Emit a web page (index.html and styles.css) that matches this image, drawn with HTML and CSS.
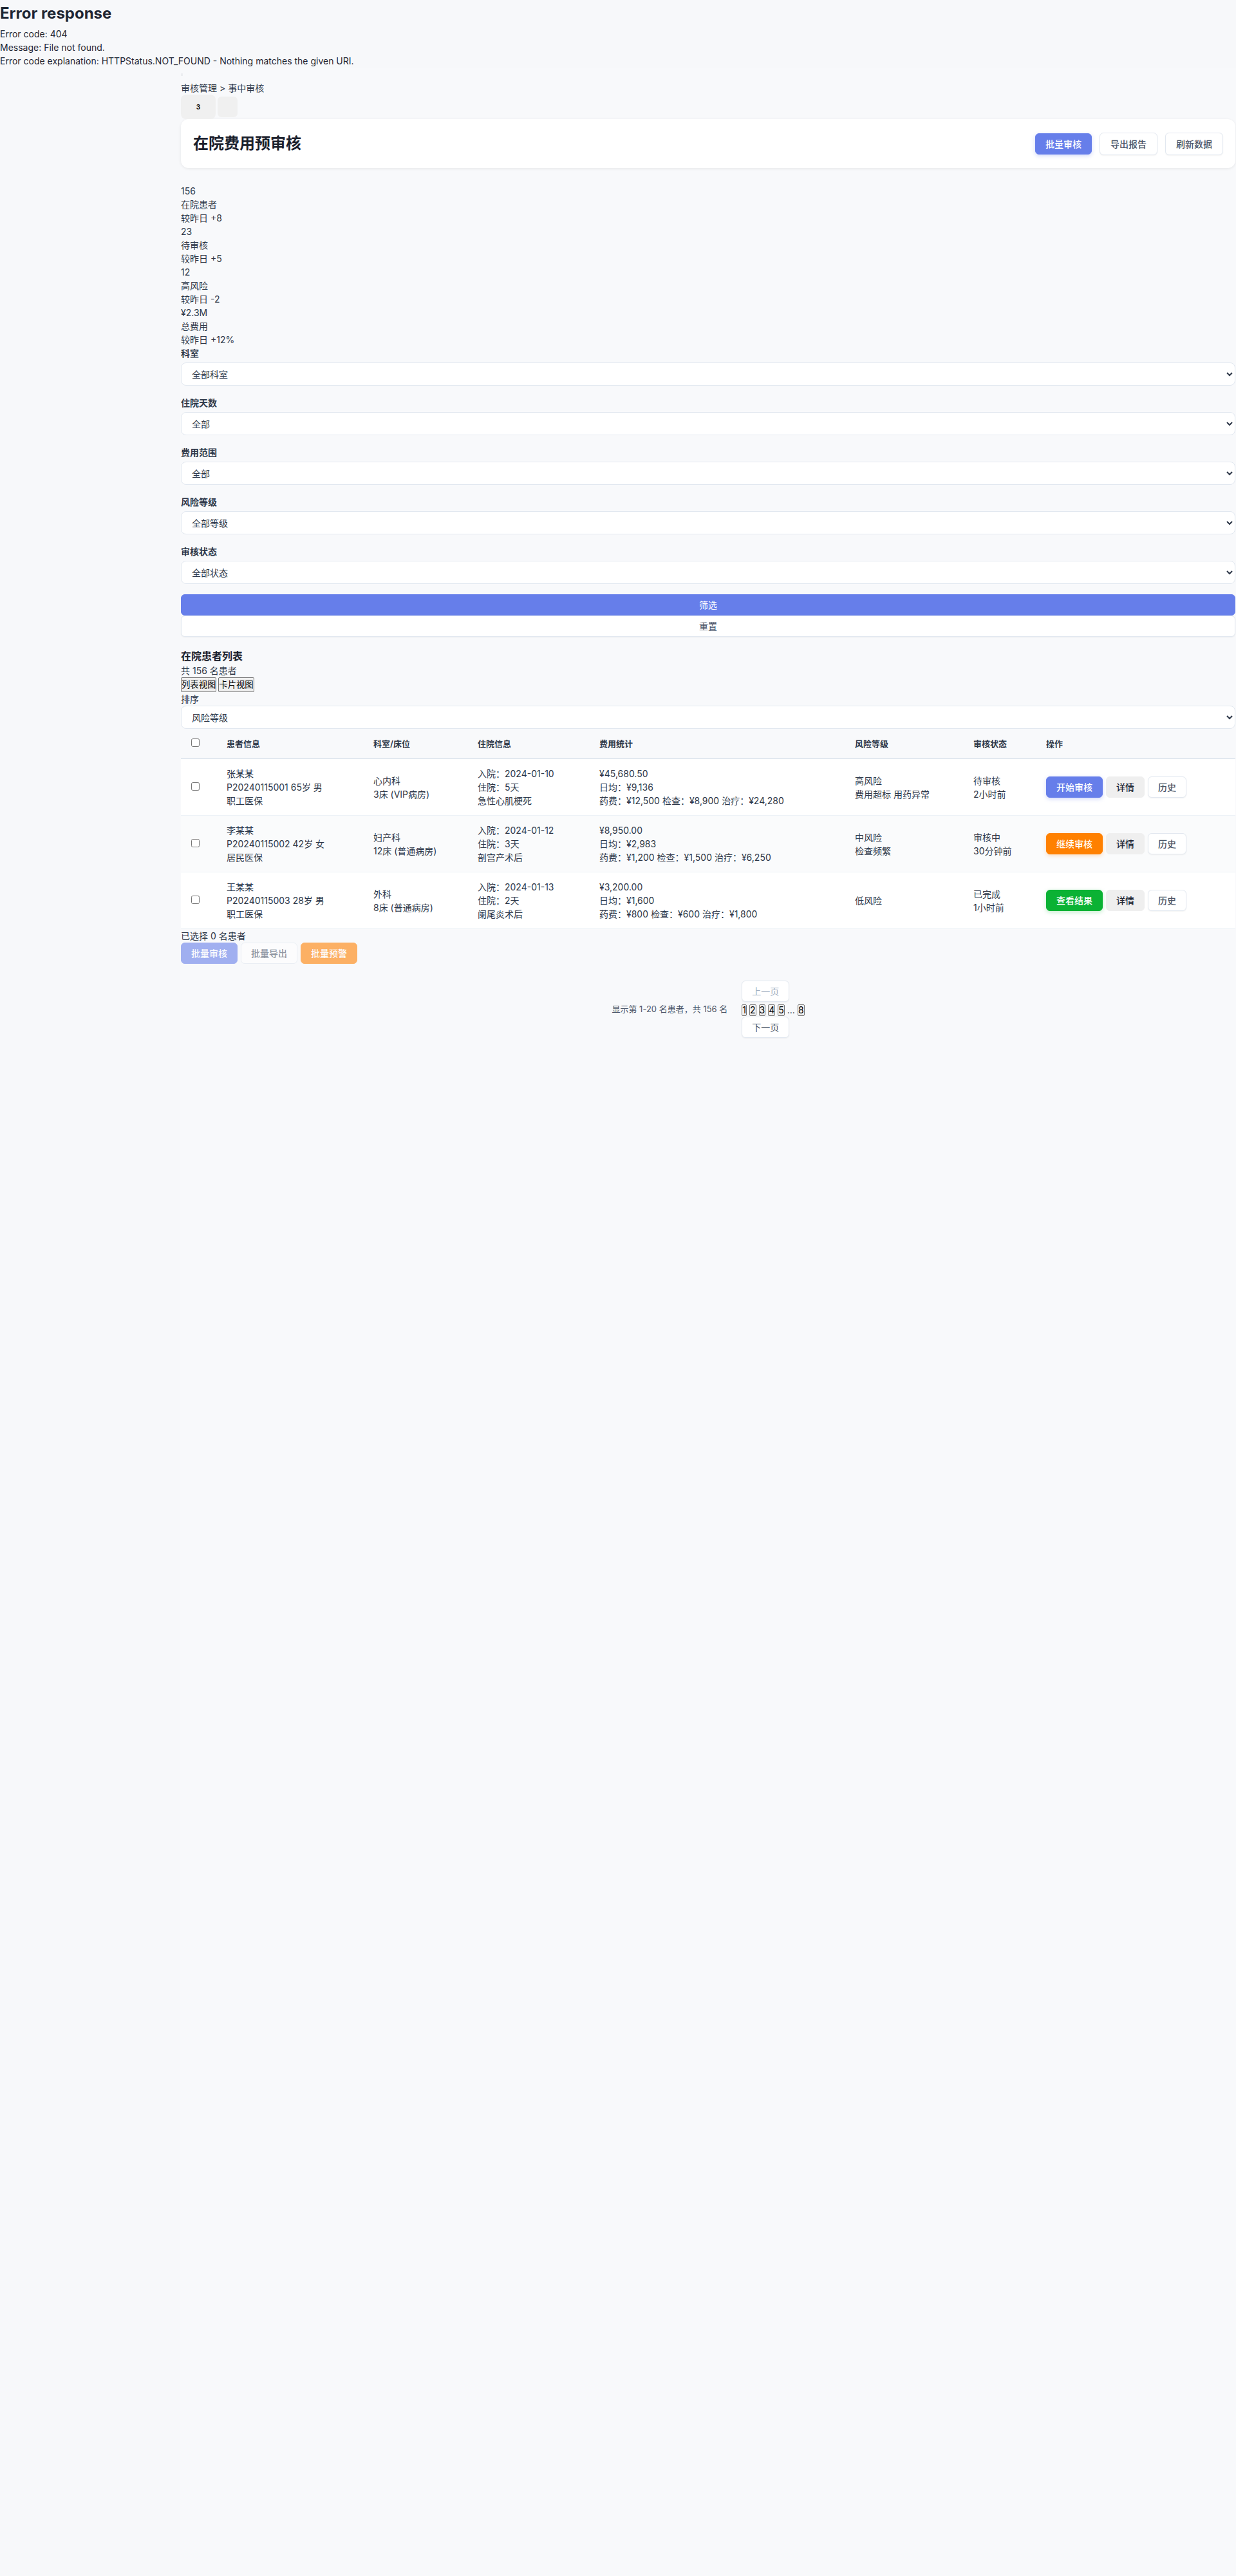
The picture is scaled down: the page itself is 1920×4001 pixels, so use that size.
FILE: index.html
```html
<!DOCTYPE html>
<html lang="zh-CN">
<head>
<meta charset="utf-8">
<title>在院费用预审核</title>
<link rel="stylesheet" href="styles.css">
</head>
<body>
<div class="error-page">
  <h1 class="error-title">Error response</h1>
  <p>Error code: 404</p>
  <p>Message: File not found.</p>
  <p>Error code explanation: HTTPStatus.NOT_FOUND - Nothing matches the given URI.</p>
</div>
<div class="layout">
  <aside class="sidebar"></aside>
  <main class="main">
    <div class="topline"><span class="mark"></span></div>
    <div class="breadcrumb">审核管理 &gt; 事中审核</div>
    <div class="top-actions">
      <button class="icon-btn"><span class="badge">3</span></button>
      <button class="icon-btn small"></button>
    </div>

    <section class="page-header">
      <h2 class="page-title">在院费用预审核</h2>
      <div class="header-actions">
        <button class="btn btn-primary">批量审核</button>
        <button class="btn btn-secondary">导出报告</button>
        <button class="btn btn-secondary">刷新数据</button>
      </div>
    </section>

    <section class="stats">
      <div>156</div>
      <div>在院患者</div>
      <div>较昨日 +8</div>
      <div>23</div>
      <div>待审核</div>
      <div>较昨日 +5</div>
      <div>12</div>
      <div>高风险</div>
      <div>较昨日 -2</div>
      <div>¥2.3M</div>
      <div>总费用</div>
      <div>较昨日 +12%</div>
    </section>

    <section class="filters">
      <div class="filter-group">
        <label class="filter-label">科室</label>
        <select class="filter-select"><option>全部科室</option></select>
      </div>
      <div class="filter-group">
        <label class="filter-label">住院天数</label>
        <select class="filter-select"><option>全部</option></select>
      </div>
      <div class="filter-group">
        <label class="filter-label">费用范围</label>
        <select class="filter-select"><option>全部</option></select>
      </div>
      <div class="filter-group">
        <label class="filter-label">风险等级</label>
        <select class="filter-select"><option>全部等级</option></select>
      </div>
      <div class="filter-group">
        <label class="filter-label">审核状态</label>
        <select class="filter-select"><option>全部状态</option></select>
      </div>
      <button class="btn btn-primary btn-block">筛选</button>
      <button class="btn btn-secondary btn-block">重置</button>
    </section>

    <section class="list-section">
      <h3 class="list-title">在院患者列表</h3>
      <div>共 156 名患者</div>
      <div class="view-toggle"><button class="plain-btn">列表视图</button><button class="plain-btn">卡片视图</button></div>
      <div>排序</div>
      <select class="filter-select"><option>风险等级</option></select>

      <table class="patient-table">
        <colgroup>
          <col class="c-check"><col class="c-patient"><col class="c-dept"><col class="c-stay"><col class="c-cost"><col class="c-risk"><col class="c-status"><col class="c-ops">
        </colgroup>
        <thead>
          <tr>
            <th><input type="checkbox"></th>
            <th>患者信息</th>
            <th>科室/床位</th>
            <th>住院信息</th>
            <th>费用统计</th>
            <th>风险等级</th>
            <th>审核状态</th>
            <th>操作</th>
          </tr>
        </thead>
        <tbody>
          <tr>
            <td><input type="checkbox"></td>
            <td><div>张某某</div><div>P20240115001 65岁 男</div><div>职工医保</div></td>
            <td><div>心内科</div><div>3床 (VIP病房)</div></td>
            <td><div>入院：2024-01-10</div><div>住院：5天</div><div>急性心肌梗死</div></td>
            <td><div>¥45,680.50</div><div>日均：¥9,136</div><div>药费：¥12,500 检查：¥8,900 治疗：¥24,280</div></td>
            <td><div>高风险</div><div>费用超标 用药异常</div></td>
            <td><div>待审核</div><div>2小时前</div></td>
            <td><div class="ops"><button class="btn btn-primary">开始审核</button><button class="btn btn-gray">详情</button><button class="btn btn-secondary">历史</button></div></td>
          </tr>
          <tr>
            <td><input type="checkbox"></td>
            <td><div>李某某</div><div>P20240115002 42岁 女</div><div>居民医保</div></td>
            <td><div>妇产科</div><div>12床 (普通病房)</div></td>
            <td><div>入院：2024-01-12</div><div>住院：3天</div><div>剖宫产术后</div></td>
            <td><div>¥8,950.00</div><div>日均：¥2,983</div><div>药费：¥1,200 检查：¥1,500 治疗：¥6,250</div></td>
            <td><div>中风险</div><div>检查频繁</div></td>
            <td><div>审核中</div><div>30分钟前</div></td>
            <td><div class="ops"><button class="btn btn-orange">继续审核</button><button class="btn btn-gray">详情</button><button class="btn btn-secondary">历史</button></div></td>
          </tr>
          <tr>
            <td><input type="checkbox"></td>
            <td><div>王某某</div><div>P20240115003 28岁 男</div><div>职工医保</div></td>
            <td><div>外科</div><div>8床 (普通病房)</div></td>
            <td><div>入院：2024-01-13</div><div>住院：2天</div><div>阑尾炎术后</div></td>
            <td><div>¥3,200.00</div><div>日均：¥1,600</div><div>药费：¥800 检查：¥600 治疗：¥1,800</div></td>
            <td><div>低风险</div></td>
            <td><div>已完成</div><div>1小时前</div></td>
            <td><div class="ops"><button class="btn btn-green">查看结果</button><button class="btn btn-gray">详情</button><button class="btn btn-secondary">历史</button></div></td>
          </tr>
        </tbody>
      </table>

      <div class="selection">已选择 0 名患者</div>
      <div class="batch-actions">
        <button class="btn btn-primary is-disabled">批量审核</button>
        <button class="btn btn-secondary is-disabled">批量导出</button>
        <button class="btn btn-orange is-disabled">批量预警</button>
      </div>

      <div class="pagination">
        <div class="page-info">显示第 1-20 名患者，共 156 名</div>
        <div class="page-controls">
          <button class="btn btn-secondary page-nav is-faded">上一页</button>
          <div class="page-nums"><button class="plain-btn num">1</button> <button class="plain-btn num">2</button> <button class="plain-btn num">3</button> <button class="plain-btn num">4</button> <button class="plain-btn num">5</button> <span class="dots">...</span> <button class="plain-btn num">8</button></div>
          <button class="btn btn-secondary page-nav">下一页</button>
        </div>
      </div>
    </section>
  </main>
</div>
</body>
</html>
```

FILE: styles.css
```css
* {
  box-sizing: border-box;
}

body {
  margin: 0;
  font-family: Inter, "Noto Sans CJK SC", sans-serif;
  font-size: 14px;
  line-height: 1.5;
  color: #1f2633;
  background: #f7f8fa;
}

.error-page p {
  margin: 0;
}

.error-title {
  margin: 0;
  font-size: 24px;
  line-height: 42px;
  font-weight: 700;
}

.layout {
  display: flex;
}

.sidebar {
  width: 280px;
  flex-shrink: 0;
}

.main {
  flex: 1;
  min-width: 0;
  min-height: 4000px;
  padding: 0 1px;
  background: #f8f9fb;
  color: #2d3748;
}

.topline {
  height: 21px;
  display: flex;
  align-items: center;
}

.mark {
  display: block;
  width: 3px;
  height: 4px;
  background: #eceef1;
}

.breadcrumb {
  height: 21px;
  color: #2d3748;
}

.top-actions {
  display: flex;
  align-items: center;
  gap: 3px;
  height: 38px;
}

.icon-btn {
  width: 54px;
  height: 38px;
  border: none;
  border-radius: 8px;
  background: #f0f0f0;
  font-family: Inter, sans-serif;
  font-size: 10px;
  font-weight: 700;
  color: #111;
  padding: 0;
}

.icon-btn.small {
  width: 31px;
  height: 32px;
  border-radius: 6px;
}

.page-header {
  display: flex;
  align-items: center;
  justify-content: space-between;
  height: 76px;
  background: #fff;
  border-radius: 12px;
  padding: 0 19px;
  box-shadow: 0 1px 4px rgba(0, 0, 0, 0.08);
}

.page-title {
  margin: 0;
  font-size: 24px;
  line-height: 36px;
  font-weight: 700;
  color: #1a202c;
}

.header-actions {
  display: flex;
  align-items: center;
  gap: 12px;
}

.btn {
  font-family: Inter, "Noto Sans CJK SC", sans-serif;
  font-size: 14px;
  line-height: 17px;
  font-weight: 500;
  padding: 7px 15px;
  border-radius: 6px;
  border: 1px solid transparent;
  cursor: pointer;
  white-space: nowrap;
}

.header-actions .btn-secondary {
  padding: 8px 16px;
}

.btn-primary {
  background: #667eea;
  border-color: #667eea;
  color: #fff;
  box-shadow: 0 2px 6px rgba(102, 126, 234, 0.3);
}

.btn-secondary {
  background: #fff;
  border-color: #e2e8f0;
  color: #4a5568;
  box-shadow: 0 1px 2px rgba(0, 0, 0, 0.05);
}

.btn-orange {
  background: #ff8000;
  border-color: #ff8000;
  color: #fff;
  box-shadow: 0 2px 6px rgba(255, 128, 0, 0.25);
}

.btn-green {
  background: #0bb234;
  border-color: #0bb234;
  color: #fff;
  box-shadow: 0 2px 6px rgba(11, 178, 52, 0.25);
}

.btn-gray {
  background: #efefef;
  border-color: #efefef;
  color: #1f2633;
}

.is-disabled {
  opacity: 0.6;
  box-shadow: none;
}

.is-faded {
  color: #a0aec0;
}

.stats {
  margin-top: 25px;
  color: #2d3748;
}

.filter-group {
  margin-bottom: 16px;
}

.filter-label {
  display: block;
  height: 21px;
  margin-bottom: 4px;
  font-weight: 600;
  color: #2d3748;
}

.filter-select {
  display: block;
  width: 100%;
  height: 36px;
  padding: 0 12px;
  font-family: Inter, "Noto Sans CJK SC", sans-serif;
  font-size: 14px;
  color: #2d3748;
  background: #fff;
  border: 1px solid #e2e8f0;
  border-radius: 8px;
}

.btn-block {
  display: block;
  width: 100%;
  height: 33px;
  padding-top: 0;
  padding-bottom: 0;
  font-weight: 400;
}

.filters .btn-primary {
  box-shadow: none;
}

.list-section {
  margin-top: 18px;
}

.list-title {
  margin: 0;
  font-size: 16px;
  line-height: 24px;
  font-weight: 700;
  color: #1a202c;
}

.view-toggle {
  display: flex;
  gap: 3px;
  height: 23px;
}

.plain-btn {
  font-family: Inter, "Noto Sans CJK SC", sans-serif;
  font-size: 13.33px;
  line-height: 21px;
  padding: 0;
  border: 1px solid #767676;
  border-radius: 2px;
  background: #efefef;
  color: #000;
}

.patient-table {
  width: 100%;
  table-layout: fixed;
  border-collapse: collapse;
  background: #fff;
}

.c-check { width: 59px; }
.c-patient { width: 228px; }
.c-dept { width: 162px; }
.c-stay { width: 189px; }
.c-cost { width: 397px; }
.c-risk { width: 184px; }
.c-status { width: 113px; }
.c-ops { width: 306px; }

.patient-table th {
  text-align: left;
  font-size: 13px;
  font-weight: 600;
  color: #2d3748;
  padding: 12px;
  height: 46px;
  line-height: 20px;
  background: #f8f9fb;
  border-bottom: 2px solid #e2e8f0;
}

.patient-table td {
  padding: 12px;
  height: 88px;
  vertical-align: middle;
  color: #2d3748;
  border-bottom: 1px solid #edf2f7;
}

.patient-table input[type="checkbox"] {
  margin: 3px 3px 3px 4px;
}

.patient-table tbody tr:nth-child(even) td {
  background: #fafbfc;
}

.patient-table td div {
  white-space: nowrap;
}

.ops {
  display: flex;
  gap: 5px;
}

.selection {
  height: 21px;
  color: #2d3748;
}

.batch-actions {
  display: flex;
  gap: 5px;
}

.pagination {
  margin-top: 26px;
  display: flex;
  justify-content: center;
  align-items: center;
  gap: 22px;
}

.page-info {
  font-size: 13px;
  color: #4a5568;
}

.page-controls {
  display: flex;
  flex-direction: column;
  align-items: flex-start;
}

.page-nav {
  font-weight: 400;
}

.page-nums {
  margin: 4px 0 1px;
  height: 18px;
  line-height: 18px;
  font-size: 14px;
  display: flex;
  align-items: center;
  gap: 4px;
}

.num {
  font-size: 14px;
  line-height: 16px;
  height: 18px;
  padding: 0;
}

.dots {
  color: #2d3748;
}
```
